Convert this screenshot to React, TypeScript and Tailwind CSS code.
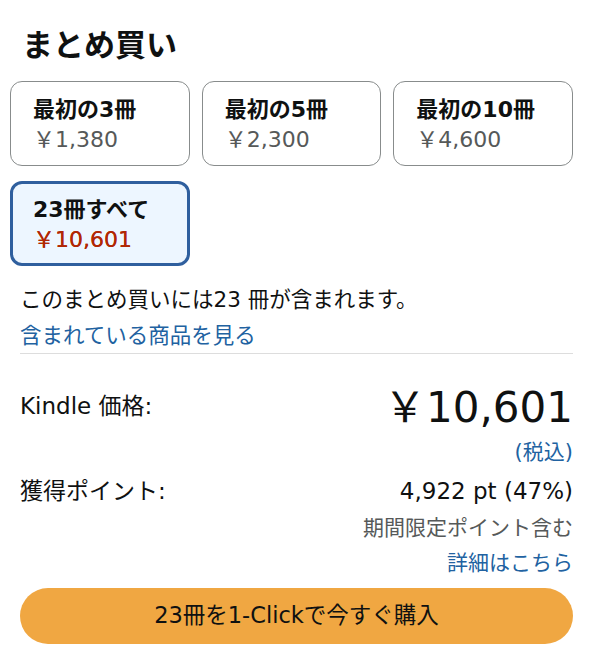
import React from "react";

type Bundle = {
  label: string;
  price: string;
};

const BUNDLES: Bundle[] = [
  { label: "最初の3冊", price: "￥1,380" },
  { label: "最初の5冊", price: "￥2,300" },
  { label: "最初の10冊", price: "￥4,600" },
];

export default function App() {
  return (
    <div
      className="w-[596px] min-h-[658px] bg-white pl-[10px] pr-[23px] pt-[25px] text-[#0f1111]"
      style={{ fontFamily: '"DejaVu Sans", "Noto Sans CJK JP", sans-serif' }}
    >
      {/* heading */}
      <h2 className="pl-[12px] text-[31px] font-bold leading-[40px]">まとめ買い</h2>

      {/* bundle options */}
      <div className="mt-[16px] grid grid-cols-3 gap-x-3 gap-y-[15px]">
        {BUNDLES.map((b) => (
          <div
            key={b.label}
            className="h-[85px] rounded-[12px] border border-[#888c8c] px-[22px] pt-[13px]"
          >
            <div className="text-[22px] font-bold leading-[30px]">{b.label}</div>
            <div className="text-[22px] leading-[30px] text-[#565959]">{b.price}</div>
          </div>
        ))}

        <div className="h-[85px] rounded-[12px] border-[3px] border-[#2f5f9e] bg-[#edf6ff] pl-[20px] pt-[11px]">
          <div className="text-[22px] font-bold leading-[30px]">23冊すべて</div>
          <div className="text-[22px] leading-[30px] text-[#b12704] [text-shadow:0_0_0.5px_#b12704]">￥10,601</div>
        </div>
      </div>

      {/* contents */}
      <div className="pl-[10px]">
        <p className="mt-[20px] text-[21.5px] leading-[28px]">このまとめ買いには23 冊が含まれます。</p>
        <a className="mt-[8px] block text-[21.5px] leading-[28px] text-[#2162a1]">含まれている商品を見る</a>

        <div className="mt-[3px] border-t border-[#dddddd]" />

        {/* price */}
        <div className="mt-[31px] flex items-center justify-between">
          <span className="-mt-[4px] text-[23px] leading-[30px]">Kindle 価格:</span>
          <span className="text-[42px] leading-[46px]">￥10,601</span>
        </div>
        <div className="mt-[7px] text-right text-[21px] leading-[28px] text-[#2162a1]">(税込)</div>

        {/* points */}
        <div className="mt-[11px] flex items-center justify-between text-[23px] leading-[28px]">
          <span>獲得ポイント:</span>
          <span>4,922 pt (47%)</span>
        </div>
        <div className="mt-[9px] text-right text-[21px] leading-[28px] text-[#565959]">期間限定ポイント含む</div>
        <a className="mt-[7px] block text-right text-[21px] leading-[28px] text-[#2162a1]">詳細はこちら</a>

        {/* buy button */}
        <button className="mt-[11px] flex h-[56px] w-full items-center justify-center rounded-full bg-[#f0a742] text-[22.5px]">
          23冊を1-Clickで今すぐ購入
        </button>
      </div>
    </div>
  );
}
